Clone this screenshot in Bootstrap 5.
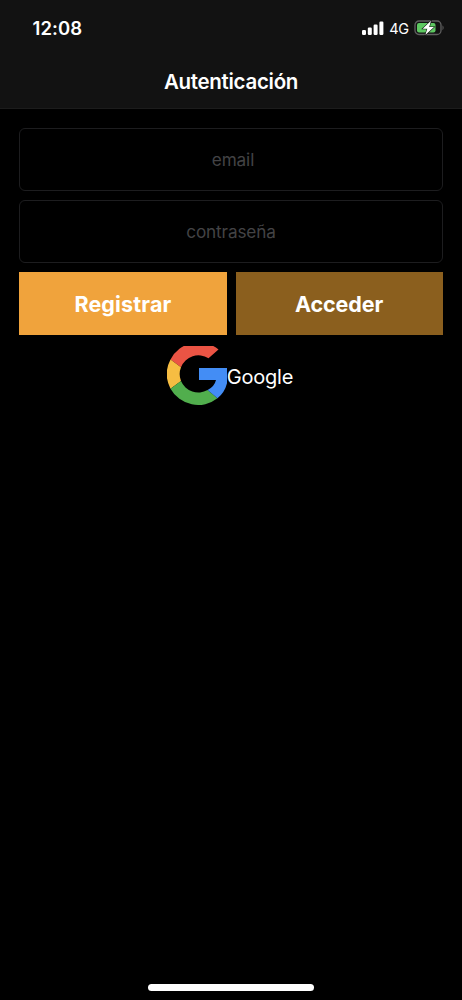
<!DOCTYPE html>
<html lang="es">
<head>
<meta charset="utf-8">
<meta name="viewport" content="width=device-width, initial-scale=1">
<title>Autenticación</title>
<link href="https://cdn.jsdelivr.net/npm/bootstrap@5.3.0/dist/css/bootstrap.min.css" rel="stylesheet">
<style>
body { background: #000; color: #fff; font-family: Inter, "Liberation Sans", sans-serif; }
.screen { height: 1000px; overflow: hidden; }
.top-area { height: 109px; background: #121212; border-bottom: 1px solid #1c1c1c; }
.status { height: 56px; padding: 0 17px 0 32.5px; }
.clock { font-size: 18.5px; letter-spacing: .1px; padding-top: 2px; }
.network { font-size: 14.5px; letter-spacing: -.2px; margin: 0 5px 0 5px; padding-top: 2px; }
.title { font-size: 20.5px; line-height: 52px; letter-spacing: -.3px; }
.auth { padding: 18.5px 19.3px 0; gap: 9px; }
.auth .form-control { height: 63.3px; background: #000; border: 1px solid #1d1d1f; border-radius: 6px; color: #fff; font-size: 17.2px; }
.auth .form-control::placeholder { color: #434345; opacity: 1; letter-spacing: -.15px; }
.auth .email-field { padding-left: 16px; }
.auth .btn { height: 63px; font-size: 21.5px; color: #fff; border: 0; padding-top: 7px; }
.auth .btn-register { background: #f0a33c; letter-spacing: .15px; }
.auth .btn-login { background: #8b5f1e; letter-spacing: -.1px; }
.choices { gap: 9px; }
.google { font-size: 20px; letter-spacing: -.2px; padding: 2px 2px 0 0; }
.google span { padding-top: 2px; }
.home-bar { width: 166px; height: 6.5px; margin-bottom: 9.5px; }
</style>
</head>
<body>
<div class="screen d-flex flex-column">
  <header class="top-area flex-shrink-0">
    <div class="status d-flex align-items-center justify-content-between">
      <span class="clock fw-semibold">12:08</span>
      <div class="d-flex align-items-center">
        <svg width="22" height="14" viewBox="0 0 22 14" fill="#fff" aria-hidden="true">
          <rect x="0" y="9" width="4" height="5" rx="1.2"/><rect x="5.8" y="6.5" width="4" height="7.5" rx="1.2"/><rect x="11.6" y="3.5" width="4" height="10.5" rx="1.2"/><rect x="17.4" y="0.5" width="4" height="13.5" rx="1.2"/>
        </svg>
        <span class="network">4G</span>
        <svg width="31" height="16" viewBox="0 0 31 16" aria-hidden="true">
          <rect x="1" y="1" width="26" height="13.5" rx="4" fill="none" stroke="#606060" stroke-width="1.3"/>
          <path d="M28.5 5.3Q30.8 7.7 28.5 10.2Z" fill="#606060"/>
          <rect x="3" y="3" width="18.5" height="9.5" rx="2" fill="#5dc861"/>
          <path d="M17 .8 8.6 8.7h4.7L11.3 15l8.7-8h-4.8Z" fill="#fff" stroke="#121212" stroke-width="1.1" paint-order="stroke"/>
        </svg>
      </div>
    </div>
    <h1 class="title fw-semibold text-center m-0">Autenticación</h1>
  </header>
  <form class="auth d-flex flex-column">
    <input class="form-control email-field text-center" type="email" placeholder="email" aria-label="email">
    <input class="form-control text-center" type="password" placeholder="contraseña" aria-label="contraseña">
    <div class="choices d-flex">
      <button class="btn btn-register rounded-0 fw-bold flex-fill w-50" type="button">Registrar</button>
      <button class="btn btn-login rounded-0 fw-bold flex-fill w-50" type="button">Acceder</button>
    </div>
    <div class="google d-flex align-items-center justify-content-center">
      <svg width="60" height="60" viewBox="167 346 60 60" aria-hidden="true">
        <path d="M170.5 359.5A31.5 31.5 0 0 1 218.5 349.5L208.5 358.3A18.7 18.7 0 0 0 181 367.2Z" fill="#eb5444"/>
        <path d="M170.5 359.5A31.5 31.5 0 0 0 170.5 388.7L181 381A18.7 18.7 0 0 1 181 367.2Z" fill="#f6bd42"/>
        <path d="M170.5 388.7A31.5 31.5 0 0 0 217.5 398.3L207.6 390A18.7 18.7 0 0 1 181 381Z" fill="#51ae4d"/>
        <path d="M199 368H228V374.5Q228 389.5 217.5 398.3L207.6 390Q214.5 386.5 216 380H199Z" fill="#438df5"/>
      </svg>
      <span>Google</span>
    </div>
  </form>
  <div class="home-bar bg-white rounded-pill mt-auto mx-auto flex-shrink-0"></div>
</div>
<script src="https://cdn.jsdelivr.net/npm/bootstrap@5.3.0/dist/js/bootstrap.bundle.min.js"></script>
</body>
</html>
